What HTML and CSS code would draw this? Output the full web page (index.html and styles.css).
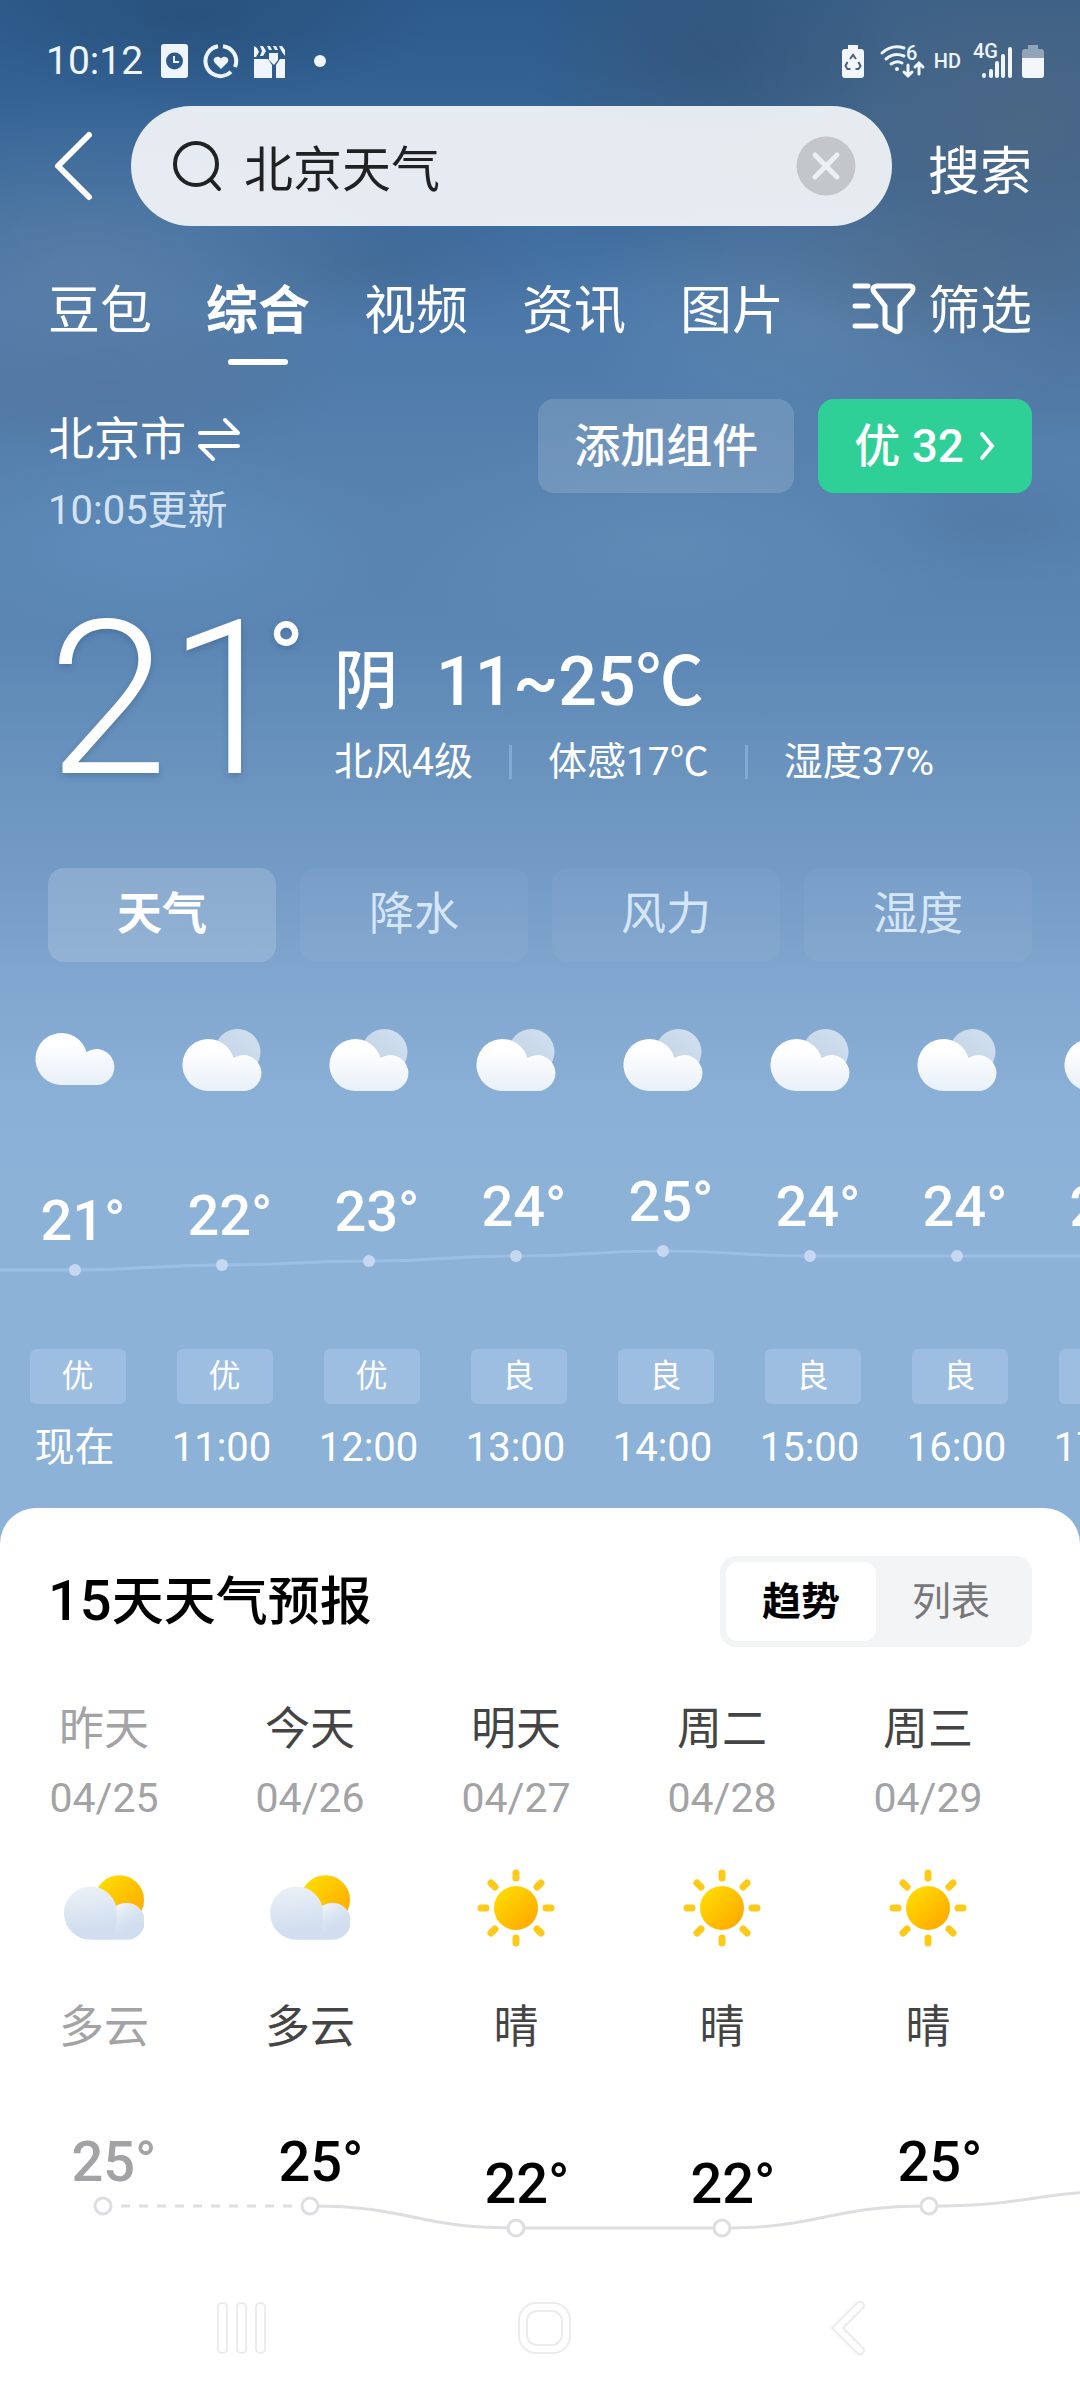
FILE: index.html
```html
<!DOCTYPE html>
<html lang="zh-CN">
<head>
    <meta charset="UTF-8">
    <meta name="viewport" content="width=device-width, initial-scale=1.0">
    <title>北京天气</title>
    <link rel="stylesheet" href="styles.css">
</head>
<body>
    <!-- Shared icons -->
    <svg class="sprite" aria-hidden="true">
        <defs>
            <linearGradient id="g-cloud" x1="0" y1="0" x2="0" y2="1">
                <stop offset="0.2" stop-color="#ffffff"/>
                <stop offset="1" stop-color="#e8f0f8"/>
            </linearGradient>
            <linearGradient id="g-back" x1="1" y1="0" x2="0" y2="1">
                <stop offset="0" stop-color="#d3e1f0"/>
                <stop offset="1" stop-color="#bfd0e4"/>
            </linearGradient>
            <linearGradient id="g-sun" x1="0" y1="0" x2="1" y2="1">
                <stop offset="0.1" stop-color="#ffdc00"/>
                <stop offset="1" stop-color="#ffa200"/>
            </linearGradient>
            <linearGradient id="g-day" x1="0.3" y1="0" x2="0.5" y2="1">
                <stop offset="0" stop-color="#ebf0f8"/>
                <stop offset="0.8" stop-color="#d0deef"/>
            </linearGradient>
            <linearGradient id="g-puff" x1="0.1" y1="0.1" x2="0.6" y2="0.7">
                <stop offset="0" stop-color="#f0f4fa"/>
                <stop offset="1" stop-color="#d0deef" stop-opacity="0"/>
            </linearGradient>
        </defs>
        <symbol id="cloud" viewBox="0 0 78 64">
            <path fill="url(#g-cloud)" d="M26 57a26 26 0 1 1 25-33a18 18 0 1 1 9 33z"/>
        </symbol>
        <symbol id="overcast" viewBox="0 0 78 64">
            <circle cx="55" cy="24" r="23" fill="url(#g-back)"/>
            <path fill="url(#g-cloud)" d="M26 63a26 26 0 1 1 25-33a18 18 0 1 1 9 33z"/>
        </symbol>
        <symbol id="partly" viewBox="0 0 78 64">
            <circle cx="54" cy="24" r="24" fill="url(#g-sun)"/>
            <path fill="url(#g-day)" d="M26 63a26 26 0 1 1 25-33a18 18 0 1 1 9 33z"/>
            <path fill="url(#g-puff)" d="M51 30a18 18 0 1 1 9 33h-12q5-16 3-33z"/>
        </symbol>
        <symbol id="sunny" viewBox="-40 -40 80 80">
            <circle r="22" fill="url(#g-sun)"/>
            <g stroke="#fdca17" stroke-width="7" stroke-linecap="round">
                <path d="M0-30v-5M0 30v5M-30 0h-5M30 0h5M-21-21l-4-4M21 21l4 4M21-21l4-4M-21 21l-4 4"/>
            </g>
        </symbol>
    </svg>

    <main class="weather">
        <div class="status">
            <span class="status-time">10:12</span>
            <svg width="27" height="34" viewBox="0 0 27 34"><path fill="#eef5fd" fill-rule="evenodd" d="M3 0h21a3 3 0 0 1 3 3v28a3 3 0 0 1-3 3H3a3 3 0 0 1-3-3V3a3 3 0 0 1 3-3zm10.500 8.500a8.500 8.500 0 1 0 0 17a8.500 8.500 0 0 0 0-17z"/><path d="M13 12v6h5" fill="none" stroke="#eef5fd" stroke-width="2"/></svg>
            <svg width="34" height="34" viewBox="0 0 34 34"><g fill="none" stroke="#eef5fd" stroke-width="4"><path d="M14 2.300A15 15 0 0 0 19 31.900"/><path d="M19 2.200A15 15 0 0 1 31 23"/><path d="M19 31.900a15 15 0 0 0 8-4"/></g><path fill="#eef5fd" d="M17 25l-6.500-6.500c-3-4 3-8 6.500-4c3.500-4 9.500 0 6.500 4z"/></svg>
            <svg width="32" height="33" viewBox="0 0 32 33"><path fill="#eef5fd" d="M0 14h14l4 6v13H0zM31 14v19h-9V20l4-6zM0 1l3 2l2 4l-3 5H0zM6 1h3l3 5l-3 5H6l2-5zM13 1h3l2 4h-3zM19 1h3l2 4h-3zM25 1h3l3 4v6l-3-4zM15 8h9v7l-4 5l-5-5z"/></svg>
            <i class="status-dot"></i>
            <svg class="status-first" width="22" height="33" viewBox="0 0 22 33"><path fill="#f3f7fb" d="M6 0h10v4h3a3 3 0 0 1 3 3v23a3 3 0 0 1-3 3H3a3 3 0 0 1-3-3V7a3 3 0 0 1 3-3h3z"/><path d="M8 14l3-4l3 4M16.500 17l2 4l-2 3h-3M5.500 17l-2 4l2 3h3" fill="none" stroke="#48617e" stroke-width="2"/></svg>
            <svg width="44" height="34" viewBox="0 0 44 34"><g fill="none" stroke="#eef5fd" stroke-width="3" stroke-linecap="round"><path d="M2 9Q12 0 24 4M6 15q8-7 18-3M11 20q6-4 11-1"/><path d="M28 21v10M24 28l4 4l4-4M39 30V20M35 23l4-4l4 4"/></g><circle cx="17" cy="25" r="2" fill="#eef5fd"/><text class="svg-mini" x="26" y="16">6</text></svg>
            <span class="status-hd">HD</span>
            <svg width="39" height="34" viewBox="0 0 39 34"><text class="svg-mini" x="0" y="14">4G</text><path d="M11 31v1M18 27v5M24 19v13M30 12v20M37 5v27" stroke="#eef5fd" stroke-width="4" stroke-linecap="round"/></svg>
            <svg width="22" height="33" viewBox="0 0 22 33"><path fill="#93a4b8" d="M6 0h10v4h3a3 3 0 0 1 3 3v6H0V7a3 3 0 0 1 3-3h3z"/><path fill="#f3f7fb" d="M0 13h22v17a3 3 0 0 1-3 3H3a3 3 0 0 1-3-3z"/></svg>
        </div>

        <form class="search">
            <button type="button" class="icon-btn back" aria-label="返回">
                <svg width="44" height="76" viewBox="0 0 44 76"><path d="M37 7L6 38l31 31" fill="none" stroke="#fff" stroke-width="6" stroke-linecap="round" stroke-linejoin="round"/></svg>
            </button>
            <div class="search-box">
                <svg width="50" height="52" viewBox="0 0 50 52"><g fill="none" stroke="#1f2123" stroke-width="4" stroke-linecap="round"><circle cx="24" cy="24" r="21"/><path d="M39 40l8 9"/></g></svg>
                <input type="text" value="北京天气" aria-label="搜索内容">
                <button type="button" class="icon-btn" aria-label="清除">
                    <svg width="60" height="60" viewBox="0 0 60 60"><circle cx="30" cy="30" r="29.500" fill="#c3c7cb"/><path d="M19 19l22 22M41 19L19 41" stroke="#eceff3" stroke-width="5" stroke-linecap="round"/></svg>
                </button>
            </div>
            <button type="submit" class="search-btn">搜索</button>
        </form>

        <nav class="tabs">
            <a href="#">豆包</a>
            <a href="#" class="active">综合</a>
            <a href="#">视频</a>
            <a href="#">资讯</a>
            <a href="#">图片</a>
            <button type="button" class="filter">
                <svg width="64" height="54" viewBox="0 0 64 54"><g fill="none" stroke="#fff" stroke-width="5" stroke-linecap="round" stroke-linejoin="round"><path d="M3 1h13M3 21h13M3 41h21"/><path d="M25 1h33q5 1 2 6L48 21v23q-1 4-5 2l-8-4q-2-1-2-4V21L22 7q-3-5 3-6z"/></g></svg>
                筛选
            </button>
        </nav>

        <section class="place">
            <div class="place-name">
                <a href="#" class="city">北京市
                    <svg width="42" height="42" viewBox="0 0 42 42"><path d="M2 15h38L27 2M40 28H2l13 13" fill="none" stroke="#fff" stroke-width="4" stroke-linejoin="round" stroke-linecap="round"/></svg>
                </a>
                <p class="updated">10:05更新</p>
            </div>
            <button type="button" class="add">添加组件</button>
            <button type="button" class="aqi">优 32
                <svg width="16" height="30" viewBox="0 0 16 30"><path d="M2 3l10 12L2 27" fill="none" stroke="#fff" stroke-width="4" stroke-linecap="round"/></svg>
            </button>
        </section>

        <section class="now">
            <div class="now-temp">21<span class="degree">°</span></div>
            <div class="now-info">
                <p class="now-main"><span>阴</span><b>11~25℃</b></p>
                <ul class="now-detail">
                    <li>北风4级</li>
                    <li>体感17℃</li>
                    <li>湿度37%</li>
                </ul>
            </div>
        </section>

        <div class="modes">
            <button type="button" class="active">天气</button>
            <button type="button">降水</button>
            <button type="button">风力</button>
            <button type="button">湿度</button>
        </div>

        <!-- Hourly forecast -->
        <section class="hourly">
            <div class="hour-row hour-icons">
                <svg><use href="#cloud"/></svg>
                <svg><use href="#overcast"/></svg>
                <svg><use href="#overcast"/></svg>
                <svg><use href="#overcast"/></svg>
                <svg><use href="#overcast"/></svg>
                <svg><use href="#overcast"/></svg>
                <svg><use href="#overcast"/></svg>
                <svg><use href="#overcast"/></svg>
            </div>
            <svg class="hour-chart" width="1176" height="160" viewBox="0 -60 1176 160">
                <path d="M-2 80H74C147 80 147 75 221 75S294 71 368 71S441 66 515 66S588 61 662 61S735 66 809 66H1176"/>
                <g class="dots">
                    <circle cx="74" cy="80" r="6"/>
                    <circle cx="221" cy="75" r="6"/>
                    <circle cx="368" cy="71" r="6"/>
                    <circle cx="515" cy="66" r="6"/>
                    <circle cx="662" cy="61" r="6"/>
                    <circle cx="809" cy="66" r="6"/>
                    <circle cx="956" cy="66" r="6"/>
                </g>
                <g class="temps">
                    <text x="82" y="50">21°</text>
                    <text x="229" y="45">22°</text>
                    <text x="376" y="41">23°</text>
                    <text x="523" y="36">24°</text>
                    <text x="670" y="31">25°</text>
                    <text x="817" y="36">24°</text>
                    <text x="964" y="36">24°</text>
                    <text x="1111" y="36">23°</text>
                </g>
            </svg>
            <div class="hour-row">
                <div class="hour"><span class="air">优</span><time>现在</time></div>
                <div class="hour"><span class="air">优</span><time>11:00</time></div>
                <div class="hour"><span class="air">优</span><time>12:00</time></div>
                <div class="hour"><span class="air">良</span><time>13:00</time></div>
                <div class="hour"><span class="air">良</span><time>14:00</time></div>
                <div class="hour"><span class="air">良</span><time>15:00</time></div>
                <div class="hour"><span class="air">良</span><time>16:00</time></div>
                <div class="hour"><span class="air">良</span><time>17:00</time></div>
            </div>
        </section>

        <!-- 15 day forecast -->
        <section class="sheet">
            <div class="sheet-head">
                <h2><span class="num">15</span>天天气预报</h2>
                <div class="switch">
                    <button type="button" class="active">趋势</button>
                    <button type="button">列表</button>
                </div>
            </div>
            <div class="days">
                <div class="day past"><span class="name">昨天</span><time>04/25</time><svg><use href="#partly"/></svg><span>多云</span></div>
                <div class="day"><span class="name">今天</span><time>04/26</time><svg><use href="#partly"/></svg><span>多云</span></div>
                <div class="day"><span class="name">明天</span><time>04/27</time><svg><use href="#sunny"/></svg><span>晴</span></div>
                <div class="day"><span class="name">周二</span><time>04/28</time><svg><use href="#sunny"/></svg><span>晴</span></div>
                <div class="day"><span class="name">周三</span><time>04/29</time><svg><use href="#sunny"/></svg><span>晴</span></div>
            </div>
            <svg class="day-chart" width="1142" height="120" viewBox="0 0 1142 120">
                <path class="dashed" d="M121 76H300"/>
                <path d="M310 76C413 76 413 98 516 98H722C825 98 825 76 929 76C1032 76 1032 61 1135 61"/>
                <g class="dots">
                    <circle cx="103" cy="76" r="8"/>
                    <circle cx="310" cy="76" r="8"/>
                    <circle cx="516" cy="98" r="8"/>
                    <circle cx="722" cy="98" r="8"/>
                    <circle cx="929" cy="76" r="8"/>
                </g>
                <g class="temps">
                    <text class="past" x="114" y="51">25°</text>
                    <text x="321" y="51">25°</text>
                    <text x="527" y="73">22°</text>
                    <text x="733" y="73">22°</text>
                    <text x="940" y="51">25°</text>
                </g>
            </svg>
            <div class="navbar">
                <button type="button" class="icon-btn" aria-label="最近任务">
                    <svg width="50" height="56" viewBox="0 0 50 56"><rect x="1" y="3" width="9" height="50" rx="4"/><rect x="20" y="3" width="9" height="50" rx="4"/><rect x="39" y="3" width="9" height="50" rx="4"/></svg>
                </button>
                <button type="button" class="icon-btn" aria-label="主屏幕">
                    <svg width="54" height="56" viewBox="0 0 54 56"><rect x="1" y="3" width="51" height="50" rx="17"/><rect x="9" y="11" width="35" height="34" rx="10"/></svg>
                </button>
                <button type="button" class="icon-btn" aria-label="返回上一级">
                    <svg width="34" height="56" viewBox="0 0 34 56"><path d="M1 28L26 3q3-3 6 0q2 3 0 5L12 28l20 20q2 2 0 5q-3 3-6 0z"/></svg>
                </button>
            </div>
        </section>
    </main>
</body>
</html>
```
FILE: styles.css
```css
* {
    box-sizing: border-box;
}

body, h2, p, ul {
    margin: 0;
    padding: 0;
}

body {
    font-family: Roboto, "Noto Sans CJK SC", sans-serif;
    color: white;
    background-color: white;
}

a {
    color: inherit;
    text-decoration: none;
}

button {
    border: none;
    padding: 0;
    background: none;
    color: inherit;
    font-family: inherit;
    line-height: 60px;
    cursor: pointer;
}

svg {
    display: block;
    flex: none;
    overflow: visible;
}

.sprite {
    position: absolute;
    width: 0;
    height: 0;
}

.icon-btn {
    display: flex;
}

.weather {
    display: flex;
    flex-direction: column;
    min-height: 100vh;
    overflow: hidden;
    background:
        radial-gradient(ellipse 240px 90px at 18% 15px, rgba(38, 74, 116, 0.6), transparent),
        radial-gradient(ellipse 190px 120px at 66% 50px, rgba(48, 80, 116, 0.6), transparent),
        radial-gradient(ellipse 480px 340px at 95% 120px, rgba(82, 104, 128, 0.75), transparent),
        radial-gradient(ellipse 320px 180px at 8% 270px, rgba(96, 130, 168, 0.7), transparent),
        radial-gradient(ellipse 200px 70px at 34% 262px, rgba(62, 94, 134, 0.4), transparent),
        radial-gradient(ellipse 180px 70px at 88% 275px, rgba(70, 98, 130, 0.4), transparent),
        radial-gradient(ellipse 260px 130px at 76% 320px, rgba(98, 142, 186, 0.6), transparent),
        radial-gradient(ellipse 240px 80px at 10% 385px, rgba(78, 108, 146, 0.5), transparent),
        radial-gradient(ellipse 260px 100px at 14% 540px, rgba(100, 148, 194, 0.5), transparent),
        radial-gradient(ellipse 300px 120px at 62% 540px, rgba(104, 148, 190, 0.4), transparent),
        radial-gradient(ellipse 180px 70px at 92% 520px, rgba(78, 116, 160, 0.5), transparent),
        linear-gradient(#2d5b8b 0, #38689a 180px, #4a77a8 300px, #5580ae 450px, #5b86b4 640px, #6791bc 740px, #729ac4 860px, #80a5ce 970px, #8ab0d7 1100px, #8cb2d8 1200px);
}

/* Status bar */
.status {
    display: flex;
    align-items: center;
    height: 106px;
    padding: 16px 36px 0 46px;
    color: #eef5fd;
}

.status-time {
    margin-right: 18px;
    font-size: 39px;
}

.status svg {
    margin-right: 16px;
}

.status-dot {
    width: 12px;
    height: 12px;
    margin-left: 12px;
    border-radius: 50%;
    background-color: #eef5fd;
}

.status .status-first {
    margin-left: auto;
}

.status-hd {
    margin-right: 12px;
    margin-left: -6px;
    font-size: 20px;
    font-weight: 500;
}

.status svg:last-child {
    margin-right: 0;
    margin-left: -6px;
}

.svg-mini {
    font-size: 20px;
    font-weight: 500;
    fill: #eef5fd;
}

/* Search */
.search {
    display: flex;
    align-items: center;
    padding: 0 48px 0 52px;
}

.back {
    width: 79px;
}

.search-box {
    display: flex;
    flex: 1;
    align-items: center;
    min-width: 0;
    height: 120px;
    padding: 0 36px 0 41px;
    border-radius: 60px;
    background-color: rgba(244, 246, 249, 0.92);
}

.search-box input {
    flex: 1;
    min-width: 0;
    margin-left: 22px;
    padding: 10px 0 0;
    border: none;
    outline: none;
    background: none;
    color: #1f2123;
    font-family: inherit;
    font-size: 49px;
    line-height: 60px;
}

.search-btn {
    margin-left: 36px;
    padding-top: 14px;
    font-size: 52px;
}

/* Result tabs */
.tabs {
    display: flex;
    gap: 54px;
    margin-top: 56px;
    padding: 0 48px;
    font-size: 52px;
    line-height: 60px;
}

.tabs a {
    position: relative;
    padding-bottom: 23px;
}

.tabs .active {
    font-weight: 700;
}

.tabs .active::after {
    content: "";
    position: absolute;
    left: 22px;
    right: 22px;
    bottom: 0;
    height: 6px;
    border-radius: 3px;
    background-color: white;
}

.filter {
    display: flex;
    gap: 12px;
    align-items: center;
    height: 60px;
    margin-left: auto;
    font-size: 52px;
}

/* Place */
.place {
    display: flex;
    align-items: flex-start;
    margin-top: 34px;
    padding: 0 48px;
}

.place-name {
    flex: 1;
    padding-top: 8px;
}

.city {
    display: flex;
    gap: 12px;
    align-items: center;
    font-size: 46px;
    line-height: 64px;
}

.updated {
    margin-top: 10px;
    color: #d3e3f5;
    font-size: 40px;
    line-height: 60px;
}

.add, .aqi {
    height: 94px;
    padding: 0 36px;
    border-radius: 16px;
    font-size: 46px;
    font-weight: 500;
}

.add {
    background-color: rgba(255, 255, 255, 0.15);
}

.aqi {
    display: flex;
    gap: 16px;
    align-items: center;
    margin-left: 24px;
    background-color: #2fcf98;
}

/* Current weather */
.now {
    display: flex;
    align-items: flex-start;
    margin-top: 79px;
    padding: 0 48px;
}

.now-temp {
    display: flex;
    width: 286px;
    font-size: 216px;
    font-weight: 300;
    line-height: 160px;
    text-shadow: 0 3px 6px rgba(40, 70, 110, 0.3);
}

.degree {
    margin-left: -20px;
    font-size: 96px;
    font-weight: 500;
    line-height: 76px;
}

.now-info {
    padding-top: 22px;
}

.now-main {
    display: flex;
    gap: 38px;
    align-items: center;
    font-size: 64px;
    line-height: 80px;
    font-weight: 500;
}

.now-main b {
    font-size: 68px;
    font-weight: 500;
}

.now-detail {
    display: flex;
    margin-top: 16px;
    font-size: 39px;
    line-height: 48px;
    list-style: none;
}

.now-detail li {
    display: flex;
    align-items: center;
}

.now-detail li + li::before {
    content: "";
    width: 3px;
    height: 34px;
    margin: 0 36px;
    background-color: rgba(140, 180, 222, 0.7);
}

/* Mode buttons */
.modes {
    display: grid;
    grid-template-columns: repeat(4, 1fr);
    gap: 24px;
    margin-top: 82px;
    padding: 0 48px;
}

.modes button {
    height: 94px;
    border-radius: 16px;
    background-color: rgba(255, 255, 255, 0.04);
    color: #d5e6f8;
    font-size: 45px;
}

.modes .active {
    background-color: rgba(255, 255, 255, 0.16);
    color: white;
    font-weight: 700;
}

/* Hourly forecast */
.hourly {
    margin-top: 66px;
}

.hour-row {
    display: flex;
    padding-left: 1px;
}

.hour-icons svg {
    width: 147px;
    height: 64px;
}

.hour-chart {
    margin-top: 38px;
    margin-left: 1px;
}

.hour-chart path {
    fill: none;
    stroke: #9cbfe6;
    stroke-width: 3;
}

.hour-chart .dots {
    fill: #c5d8f0;
}

.temps {
    font-size: 56px;
    font-weight: 500;
    text-anchor: middle;
    fill: white;
}

.hour {
    display: flex;
    flex: 0 0 147px;
    flex-direction: column;
    align-items: center;
    margin-top: 59px;
}

.air {
    width: 96px;
    margin-left: 6px;
    border-radius: 6px;
    background-color: #9dbee1;
    font-size: 32px;
    line-height: 55px;
    text-align: center;
}

.hour time {
    margin-top: 16px;
    font-size: 40px;
    line-height: 56px;
}

/* Daily forecast */
.sheet {
    display: flex;
    flex: 1;
    flex-direction: column;
    margin-top: 32px;
    padding-top: 48px;
    border-radius: 36px 36px 0 0;
    background-color: white;
    color: #444;
}

.sheet-head {
    display: flex;
    align-items: center;
    justify-content: space-between;
    padding: 0 48px;
}

.sheet-head h2 {
    color: black;
    font-size: 52px;
    font-weight: 500;
    line-height: 64px;
}

.num {
    font-size: 56px;
}

.switch {
    display: flex;
    padding: 6px;
    border-radius: 16px;
    background-color: #f3f4f6;
}

.switch button {
    width: 150px;
    height: 79px;
    border-radius: 12px;
    color: #777;
    font-size: 39px;
}

.switch .active {
    background-color: white;
    color: black;
    font-weight: 700;
}

.days {
    display: flex;
    margin-top: 51px;
    padding-left: 1px;
}

.day {
    display: flex;
    flex: 0 0 206px;
    flex-direction: column;
    align-items: center;
    font-size: 45px;
    line-height: 64px;
}

.day time {
    margin-top: 4px;
    color: #a3a3a6;
    font-size: 41px;
}

.day svg {
    width: 80px;
    height: 80px;
    margin: 38px 0 48px;
}

.day.past {
    color: #a3a3a6;
}

.day-chart {
    margin-top: 70px;
}

.day-chart path {
    fill: none;
    stroke: #dedee2;
    stroke-width: 3;
}

.day-chart .dashed {
    stroke-dasharray: 9 9;
}

.day-chart .dots {
    fill: white;
    stroke: #dedee2;
    stroke-width: 3;
}

.day-chart .temps {
    fill: black;
}

.day-chart .past {
    fill: #a3a3a6;
}

/* System navigation */
.navbar {
    display: grid;
    grid-template-columns: repeat(3, 1fr);
    justify-items: center;
    margin-top: auto;
    padding: 0 80px 44px 90px;
}

.navbar svg {
    fill: none;
    stroke: #ececee;
    stroke-width: 2;
}
```
